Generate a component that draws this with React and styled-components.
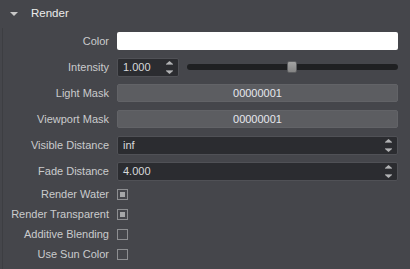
import React from "react";
import styled, { createGlobalStyle } from "styled-components";

const Global = createGlobalStyle`
  html, body { margin: 0; padding: 0; background: #45464b; }
  body { font-family: "Liberation Sans", Arial, sans-serif; font-size: 11px; color: #cacbcd; }
`;

const Panel = styled.div`
  width: 410px;
  height: 269px;
  background: #45464b;
  overflow: hidden;
`;

const Header = styled.div`
  height: 28px;
  display: flex;
  align-items: center;
  padding-left: 10px;
  gap: 13px;
  color: #ececec;
  font-size: 11.5px;
  padding-bottom: 2px;
  box-sizing: border-box;
`;

const Caret = styled.span`
  width: 0;
  height: 0;
  border-left: 4px solid transparent;
  border-right: 4px solid transparent;
  border-top: 4px solid #c8c8c8;
  margin-top: 1px;
`;

const Body = styled.div`
  margin-left: 2px;
  border-left: 1px solid #3d3e42;
  padding-right: 12px;
  padding-bottom: 10px;
`;

const Row = styled.div`
  display: grid;
  grid-template-columns: 106px 1fr;
  column-gap: 8px;
  align-items: center;
  height: ${(p) => p.$h}px;
`;

const Label = styled.div`
  text-align: right;
  color: #cacbcd;
  white-space: nowrap;
  line-height: 14px;
`;

const ColorBox = styled.div`
  height: 18px;
  background: #ffffff;
  border-radius: 2px;
`;

const Inline = styled.div`
  display: flex;
  align-items: center;
  gap: 8px;
`;

const Field = styled.div`
  box-sizing: border-box;
  height: ${(p) => p.$h || 19}px;
  width: ${(p) => (p.$w ? p.$w + "px" : "auto")};
  flex: ${(p) => (p.$w ? "none" : "1")};
  background: #2b2c30;
  border: 1px solid #505156;
  border-radius: 2px;
  display: flex;
  align-items: center;
  padding-left: 5px;
  padding-right: 5px;
  color: #d8d9db;
`;

const FieldText = styled.span`
  flex: 1;
`;

const Track = styled.div`
  flex: 1;
  height: 6px;
  background: #1f2022;
  border-radius: 3px;
  position: relative;
`;

const Handle = styled.div`
  position: absolute;
  top: -3px;
  width: 10px;
  height: 12px;
  box-sizing: border-box;
  border: 1px solid #5b5c5f;
  border-radius: 2px;
  background: linear-gradient(#a3a3a3, #848484);
`;

const MaskButton = styled.div`
  box-sizing: border-box;
  height: 18px;
  background: #5c5d61;
  border: 1px solid #626367;
  border-radius: 2px;
  display: flex;
  align-items: center;
  justify-content: center;
  color: #e6e8ee;
`;

const Check = styled.div`
  box-sizing: border-box;
  width: 11px;
  height: 11px;
  border: 1px solid #8d8e91;
  padding: 2px;
  display: flex;
`;

const CheckFill = styled.div`
  flex: 1;
  background: #a6a7a9;
`;

function Spin() {
  return (
    <svg width="7" height="13" viewBox="0 0 7 13" style={{ display: "block" }}>
      <path d="M0 3 L3.5 0 L7 3 Z" fill="#b2b3b5" />
      <rect x="0" y="3" width="7" height="1" fill="#7f8083" />
      <rect x="0" y="9" width="7" height="1" fill="#7f8083" />
      <path d="M0 10 L7 10 L3.5 13 Z" fill="#b2b3b5" />
    </svg>
  );
}

const checks = [
  ["Render Water", true],
  ["Render Transparent", true],
  ["Additive Blending", false],
  ["Use Sun Color", false],
];

export default function App() {
  return (
    <>
      <Global />
      <Panel>
        <Header>
          <Caret />
          <span>Render</span>
        </Header>
        <Body>
          <Row $h={26}>
            <Label>Color</Label>
            <ColorBox />
          </Row>
          <Row $h={26}>
            <Label>Intensity</Label>
            <Inline>
              <Field $w={62} $h={19}>
                <FieldText>1.000</FieldText>
                <Spin />
              </Field>
              <Track>
                <Handle style={{ left: "100px" }} />
              </Track>
            </Inline>
          </Row>
          <Row $h={26}>
            <Label>Light Mask</Label>
            <MaskButton>00000001</MaskButton>
          </Row>
          <Row $h={26}>
            <Label>Viewport Mask</Label>
            <MaskButton>00000001</MaskButton>
          </Row>
          <Row $h={26}>
            <Label>Visible Distance</Label>
            <Field>
              <FieldText>inf</FieldText>
              <Spin />
            </Field>
          </Row>
          <Row $h={26}>
            <Label>Fade Distance</Label>
            <Field>
              <FieldText>4.000</FieldText>
              <Spin />
            </Field>
          </Row>
          {checks.map(([name, on]) => (
            <Row $h={20} key={name}>
              <Label>{name}</Label>
              <Check>{on && <CheckFill />}</Check>
            </Row>
          ))}
        </Body>
      </Panel>
    </>
  );
}
